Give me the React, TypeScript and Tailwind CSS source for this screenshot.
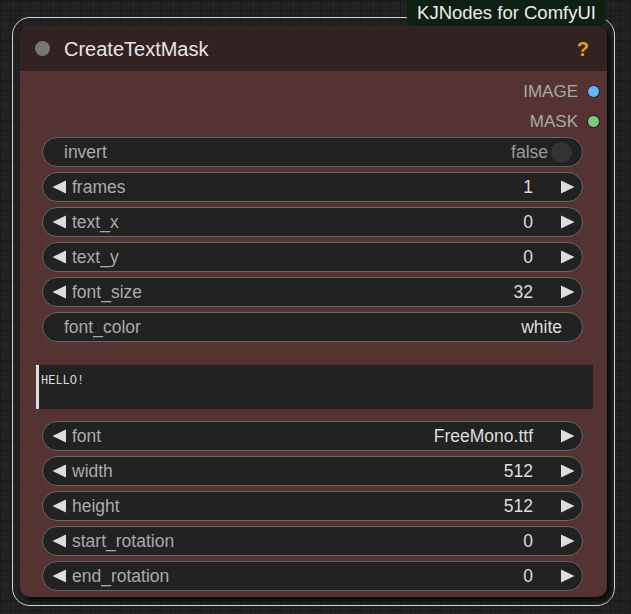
import React from 'react';

type Widget =
  | { kind: 'toggle'; label: string; value: string }
  | { kind: 'number'; label: string; value: string }
  | { kind: 'text'; label: string; value: string };

const topWidgets: Widget[] = [
  { kind: 'toggle', label: 'invert', value: 'false' },
  { kind: 'number', label: 'frames', value: '1' },
  { kind: 'number', label: 'text_x', value: '0' },
  { kind: 'number', label: 'text_y', value: '0' },
  { kind: 'number', label: 'font_size', value: '32' },
  { kind: 'text', label: 'font_color', value: 'white' },
];

const bottomWidgets: Widget[] = [
  { kind: 'number', label: 'font', value: 'FreeMono.ttf' },
  { kind: 'number', label: 'width', value: '512' },
  { kind: 'number', label: 'height', value: '512' },
  { kind: 'number', label: 'start_rotation', value: '0' },
  { kind: 'number', label: 'end_rotation', value: '0' },
];

const outputs = [
  { name: 'IMAGE', color: 'bg-[#64b5f6]' },
  { name: 'MASK', color: 'bg-[#81c784]' },
];

const Arrow = ({ dir }: { dir: 'left' | 'right' }) => (
  <svg width="14" height="14" viewBox="0 0 14 14" className="shrink-0">
    {dir === 'left' ? (
      <polygon points="14,0.5 14,13.5 0.5,7" fill="#dddddd" />
    ) : (
      <polygon points="0,0.5 0,13.5 13.5,7" fill="#dddddd" />
    )}
  </svg>
);

const WidgetRow = ({ w }: { w: Widget }) => {
  if (w.kind === 'toggle') {
    return (
      <div className="flex items-center h-[30px] w-[541px] rounded-full border border-[#666] bg-[#222] pl-[21px] pr-[10px] pt-[2px]">
        <span className="text-[#aaa] flex-1">{w.label}</span>
        <span className="text-[#999] mr-[3px]">{w.value}</span>
        <div className="w-[21px] h-[21px] rounded-full bg-[#333] -mt-[2px]" />
      </div>
    );
  }
  if (w.kind === 'text') {
    return (
      <div className="flex items-center h-[30px] w-[541px] rounded-full border border-[#666] bg-[#222] pl-[21px] pr-[20px] pt-[2px]">
        <span className="text-[#aaa] flex-1">{w.label}</span>
        <span className="text-[#ddd]">{w.value}</span>
      </div>
    );
  }
  return (
    <div className="flex items-center h-[30px] w-[541px] rounded-full border border-[#666] bg-[#222] pl-[9px] pr-[7px] pt-[2px]">
      <div className="-mt-[2px]">
        <Arrow dir="left" />
      </div>
      <span className="text-[#aaa] ml-[6px] flex-1">{w.label}</span>
      <span className="text-[#ddd] mr-[28px]">{w.value}</span>
      <div className="-mt-[2px]">
        <Arrow dir="right" />
      </div>
    </div>
  );
};

export default function App() {
  return (
    <div className="relative w-[631px] h-[614px] overflow-hidden bg-[#222] bg-[linear-gradient(#1a1a1a_1px,transparent_1px),linear-gradient(90deg,#1a1a1a_1px,transparent_1px)] bg-[size:10px_10px] pt-[17px] pl-[12px] font-['Liberation_Sans',Arial,sans-serif]">
      {/* selection outline */}
      <div className="w-[603px] h-[589px] rounded-[18px] border border-[#d0d0d0] pt-[8px] pl-[7px]">
        {/* node */}
        <div className="w-[587px] h-[571px] rounded-[10px] bg-[#553333] overflow-hidden flex flex-col shadow-[3px_3px_4px_rgba(0,0,0,0.8)]">
          <div className="h-[45px] shrink-0 bg-[#332222] flex items-center pl-[15px] pr-[18px]">
            <div className="w-[15px] h-[15px] rounded-full bg-[#777]" />
            <span className="ml-[14px] text-[20px] leading-none text-[#e6e6e6]">CreateTextMask</span>
            <span className="ml-auto text-[20px] font-bold leading-none text-[#e89b1d]">?</span>
          </div>

          <div className="flex flex-col pt-[5px] text-[17.5px] leading-none">
            {outputs.map((o) => (
              <div key={o.name} className="flex items-center justify-end h-[30px] pr-[7px]">
                <span className="text-[17px] text-[#a8a8a8]">{o.name}</span>
                <div className={`w-[13px] h-[13px] rounded-full border border-[#1a1a1a] ml-[9px] ${o.color}`} />
              </div>
            ))}

            <div className="flex flex-col gap-[5px] mt-[1px] pl-[22px]">
              {topWidgets.map((w) => (
                <WidgetRow key={w.label} w={w} />
              ))}
            </div>

            <div className="mt-[23px] ml-[16px] w-[557px] h-[44px] bg-[#222] border-l-[3px] border-[#ddd] pl-[2px] pt-[5px]">
              <span className="font-['Liberation_Mono',monospace] text-[12px] text-[#ddd]">HELLO!</span>
            </div>

            <div className="flex flex-col gap-[5px] mt-[12px] pl-[22px]">
              {bottomWidgets.map((w) => (
                <WidgetRow key={w.label} w={w} />
              ))}
            </div>
          </div>
        </div>
      </div>

      {/* badge */}
      <div className="absolute top-0 left-[407px] w-[199px] h-[26px] rounded-b-[8px] bg-[#0e1f13] flex items-center justify-center">
        <span className="text-[18.5px] leading-none text-[#ececec]">KJNodes for ComfyUI</span>
      </div>
    </div>
  );
}
